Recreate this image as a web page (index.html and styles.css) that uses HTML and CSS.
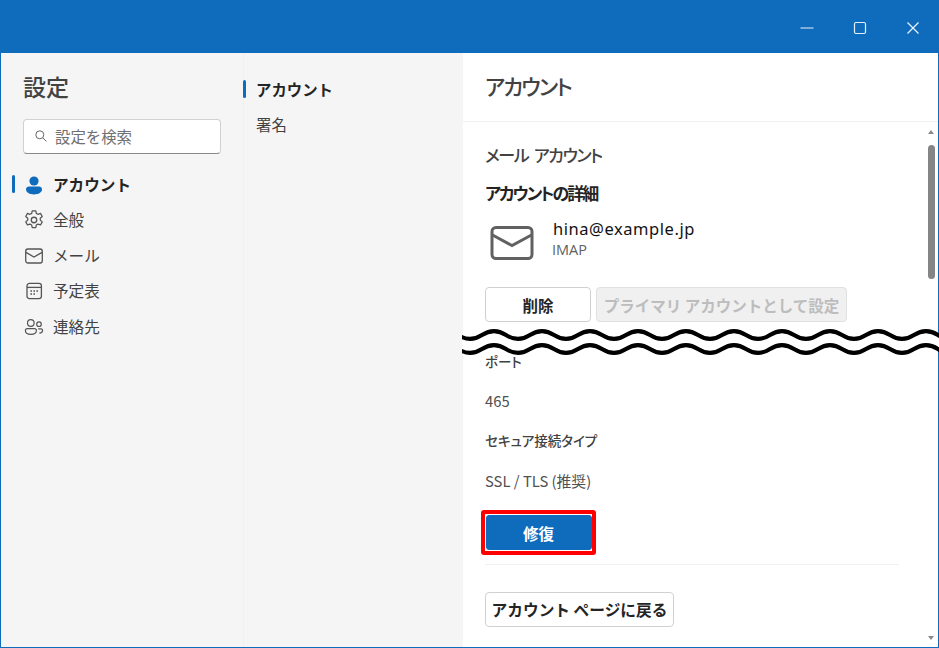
FILE: index.html
```html
<!DOCTYPE html>
<html lang="ja">
<head>
<meta charset="utf-8">
<title>設定</title>
<link rel="stylesheet" href="styles.css">
</head>
<body>
<div class="app">
  <header class="titlebar">
    <svg class="win" width="16" height="16" viewBox="0 0 16 16"><path d="M1.500 8h13" stroke="#c9dcf0" stroke-width="1.200"/></svg>
    <svg class="win" width="16" height="16" viewBox="0 0 16 16"><rect x="2.500" y="2.500" width="11" height="11" rx="1.500" fill="none" stroke="#e4eef8" stroke-width="1.200"/></svg>
    <svg class="win" width="16" height="16" viewBox="0 0 16 16"><path d="M2.500 2.500l11 11M13.500 2.500l-11 11" stroke="#eef4fb" stroke-width="1.200"/></svg>
  </header>
  <div class="body">
    <nav class="nav">
      <h1 class="nav-title">設定</h1>
      <div class="search">
        <svg width="14" height="14" viewBox="0 0 14 14"><circle cx="5.800" cy="5.800" r="4" fill="none" stroke="#666" stroke-width="1"/><path d="M8.800 8.800l3.600 3.600" stroke="#666" stroke-width="1"/></svg>
        <span>設定を検索</span>
      </div>
      <ul class="nav-list">
        <li class="nav-item active">
          <svg width="20" height="20" viewBox="0 0 20 20"><circle cx="10" cy="6" r="4.600" fill="#0f6cbd"/><path d="M2 14.200c0-1.600 1.300-2.800 2.900-2.800h10.200c1.600 0 2.900 1.200 2.900 2.800 0 3.300-3.500 5.200-8 5.200s-8-1.900-8-5.200z" fill="#0f6cbd"/></svg>
          <span>アカウント</span>
        </li>
        <li class="nav-item">
          <svg width="20" height="20" viewBox="0 0 20 20" fill="none" stroke="#555" stroke-width="1.150"><g transform="translate(10 10) scale(1.100) translate(-10 -9.800)"><path d="M8.400 1.400h3.200l.5 2.400 1.500.8 2.300-.8 1.600 2.800-1.800 1.600v1.700l1.800 1.600-1.600 2.800-2.300-.8-1.500.9-.5 2.300H8.400l-.5-2.300-1.500-.9-2.300.8-1.600-2.800 1.800-1.600V8.200L2.500 6.600l1.600-2.800 2.300.8 1.500-.8z" stroke-linejoin="round"/><circle cx="10" cy="9.800" r="2.500"/></g></svg>
          <span>全般</span>
        </li>
        <li class="nav-item">
          <svg width="20" height="20" viewBox="0 0 20 20" fill="none" stroke="#555" stroke-width="1.300"><rect x="1.700" y="3" width="16.600" height="14" rx="2.200"/><path d="M1.900 6.400L10 11l8.100-4.600"/></svg>
          <span>メール</span>
        </li>
        <li class="nav-item">
          <svg width="20" height="20" viewBox="0 0 20 20" fill="none" stroke="#555" stroke-width="1.300"><rect x="3" y="2.400" width="14.400" height="15.200" rx="2.400"/><path d="M3 6.400h14.400"/><path d="M6.400 10h1.600M9.400 10h1.600M12.400 10h1.600M6.400 13h1.600M9.400 13h1.600" stroke-width="1.600"/></svg>
          <span>予定表</span>
        </li>
        <li class="nav-item">
          <svg width="20" height="20" viewBox="0 0 20 20" fill="none" stroke="#555" stroke-width="1.200"><circle cx="6.800" cy="6" r="3.300"/><path d="M1.400 13.600c0-1.200.9-2 2-2h7c1.100 0 2 .8 2 2 0 2.400-2.500 3.800-5.500 3.800s-5.500-1.400-5.500-3.800z"/><circle cx="15" cy="7.200" r="2.300"/><path d="M14.200 11.800h2.600c1 0 1.800.7 1.800 1.700 0 1.500-1.300 2.500-3.300 2.600"/></svg>
          <span>連絡先</span>
        </li>
      </ul>
    </nav>
    <aside class="sub">
      <div class="sub-item active">アカウント</div>
      <div class="sub-item">署名</div>
    </aside>
    <main class="main">
      <h2 class="main-title">アカウント</h2>
      <div class="scroller">
        <div class="content">
          <h3 class="section">メール アカウント</h3>
          <h4 class="detail">アカウントの詳細</h4>
          <div class="account">
            <svg class="account-icon" width="48" height="40" viewBox="0 0 48 40" fill="none" stroke="#616161" stroke-width="3"><rect x="4" y="3.500" width="40" height="31" rx="4"/><path d="M4.500 11L24 21.500 43.500 11"/></svg>
            <div class="account-text">
              <div class="email">hina@example.jp</div>
              <div class="proto">IMAP</div>
            </div>
          </div>
          <div class="btn-row">
            <button class="btn wide">削除</button>
            <button class="btn disabled">プライマリ アカウントとして設定</button>
          </div>
          <div class="label port">ポート</div>
          <div class="value">465</div>
          <div class="label">セキュア接続タイプ</div>
          <div class="value ssl">SSL / TLS (推奨)</div>
          <div class="highlight"><button class="btn wide primary">修復</button></div>
          <hr class="rule">
          <button class="btn back">アカウント ページに戻る</button>
        </div>
        <div class="scrollbar">
          <span class="arrow up"></span>
          <span class="thumb"></span>
          <span class="arrow down"></span>
        </div>
      </div>
      <svg class="cut" width="477" height="32" viewBox="0 0 477 32">
        <path class="cut-fill" d="M-4 9q12 7.800 24 0t24 0t24 0t24 0t24 0t24 0t24 0t24 0t24 0t24 0t24 0t24 0t24 0t24 0t24 0t24 0t24 0t24 0t24 0t24 0t24 0V23H-4z"/>
        <path class="cut-line" d="M-4 9q12 7.800 24 0t24 0t24 0t24 0t24 0t24 0t24 0t24 0t24 0t24 0t24 0t24 0t24 0t24 0t24 0t24 0t24 0t24 0t24 0t24 0t24 0"/>
        <path class="cut-line" d="M-4 23q12 7.800 24 0t24 0t24 0t24 0t24 0t24 0t24 0t24 0t24 0t24 0t24 0t24 0t24 0t24 0t24 0t24 0t24 0t24 0t24 0t24 0t24 0"/>
      </svg>
    </main>
  </div>
</div>
</body>
</html>
```
FILE: styles.css
```css
* { box-sizing: border-box; }
html, body { margin: 0; height: 100%; }
body { font-family: "Noto Sans CJK JP", sans-serif; color: #323130; overflow: hidden; }
h1, h2, h3, h4, ul { margin: 0; padding: 0; }
ul { list-style: none; }
.app { width: 939px; height: 648px; display: flex; flex-direction: column; border: 1px solid #0f6cbd; border-top: 0; }
.titlebar { height: 53px; margin: 0 -1px; background: #0f6cbd; display: flex; justify-content: flex-end; align-items: center; gap: 37px; padding: 3px 18px 0 0; flex: none; }
.body { flex: 1; display: flex; min-height: 0; background: #f5f5f5; }
.nav { width: 242px; flex: none; padding: 17px 22px 0 0; }
.nav-title { font-size: 23px; font-weight: 500; line-height: 32px; margin-left: 22px; color: #424242; }
.search { margin: 17px 0 0 22px; height: 35px; background: #fff; border: 1px solid #d1d1d1; border-bottom-color: #8a8a8a; border-radius: 4px; display: flex; align-items: center; gap: 7px; padding: 0 0 2px 10px; font-size: 15.400px; color: #707070; }
.nav-list { margin-top: 13px; }
.nav-item { position: relative; height: 35.500px; display: flex; align-items: center; gap: 9px; padding-left: 23px; font-size: 15.600px; color: #424242; }
.nav-item span { position: relative; top: -1px; }
.nav-item.active { font-weight: 700; color: #242424; }
.nav-item.active::before { content: ""; position: absolute; left: 11px; top: 8px; width: 3px; height: 18px; border-radius: 2px; background: #0f6cbd; }
.sub { width: 220px; flex: none; border-left: 1px solid #f0f0f0; padding-top: 18px; font-size: 15.400px; color: #424242; }
.sub-item { position: relative; height: 35px; display: flex; align-items: center; padding-left: 12px; }
.sub-item.active { font-weight: 700; color: #242424; }
.sub-item.active::before { content: ""; position: absolute; left: -1px; top: 9px; width: 3px; height: 18px; background: #0f6cbd; border-radius: 2px; }
.main { position: relative; flex: 1; min-width: 0; background: #fff; display: flex; flex-direction: column; }
.main-title { height: 69px; flex: none; border-bottom: 1px solid #f0f0f0; padding: 16px 0 0 22px; font-size: 21.500px; line-height: 34px; font-weight: 500; color: #424242; font-feature-settings: "palt"; letter-spacing: -1.800px; }
.scroller { flex: 1; min-height: 0; display: flex; }
.content { flex: 1; padding: 21px 0 0 22px; min-width: 0; }
.section { font-size: 17px; line-height: 24px; font-weight: 500; color: #424242; font-feature-settings: "palt"; letter-spacing: -1.400px; word-spacing: 3px; }
.detail { font-size: 17px; line-height: 24px; font-weight: 700; color: #242424; margin-top: 14px; font-feature-settings: "palt"; letter-spacing: -2px; }
.account { display: flex; align-items: center; gap: 17px; margin: 10px 0 0 3px; height: 48px; }
.account-icon { margin-top: 10px; }
.email { font-family: "Noto Sans", sans-serif; font-size: 16.500px; line-height: 22px; color: #111; letter-spacing: .55px; }
.proto { font-family: "Open Sans", sans-serif; font-size: 14.500px; line-height: 20px; color: #616161; margin-left: -1px; }
.btn-row { display: flex; gap: 5px; margin-top: 24px; }
.btn { height: 35px; border: 1px solid #d1d1d1; border-radius: 4px; background: #fff; color: #242424; font: 700 15.500px "Noto Sans CJK JP", sans-serif; padding: 0; display: block; }
.btn.wide { width: 106px; }
.btn.disabled { width: 251px; background: #f0f0f0; border-color: #e0e0e0; color: #bdbdbd; }
.label { font-size: 13.500px; line-height: 20px; font-weight: 500; color: #424242; font-feature-settings: "palt"; }
.label.port { margin-top: 29px; }
.value { font-size: 14.800px; line-height: 20px; margin: 20px 0 19px; color: #505050; font-feature-settings: "palt"; }
.value.ssl { margin-top: 21px; }
.highlight { width: 115px; height: 45px; margin: 15px 0 0 -4px; border: 4px solid #f00; border-radius: 3px; background: #fff; display: flex; justify-content: center; align-items: center; }
.btn.primary { background: #0f6cbd; border-color: #0f6cbd; color: #fff; border-radius: 3px; flex: none; }
.rule { border: 0; border-top: 1px solid #f0f0f0; margin: 9px 25px 0 0; }
.btn.back { margin-top: 27px; width: 189px; font-size: 15.700px; }
.scrollbar { width: 14px; flex: none; display: flex; flex-direction: column; align-items: center; padding-top: 8px; }
.arrow { width: 0; height: 0; border-left: 3px solid transparent; border-right: 3px solid transparent; }
.arrow.up { border-bottom: 4px solid #8a8a8a; }
.arrow.down { border-top: 4px solid #8a8a8a; margin-top: auto; margin-bottom: 7px; }
.thumb { width: 7px; height: 134px; border-radius: 4px; background: #858585; margin-top: 11px; }
.cut { position: absolute; left: -1px; top: 273px; display: block; }
.cut-fill { fill: #fff; }
.cut-line { fill: none; stroke: #000; stroke-width: 4; }
```
